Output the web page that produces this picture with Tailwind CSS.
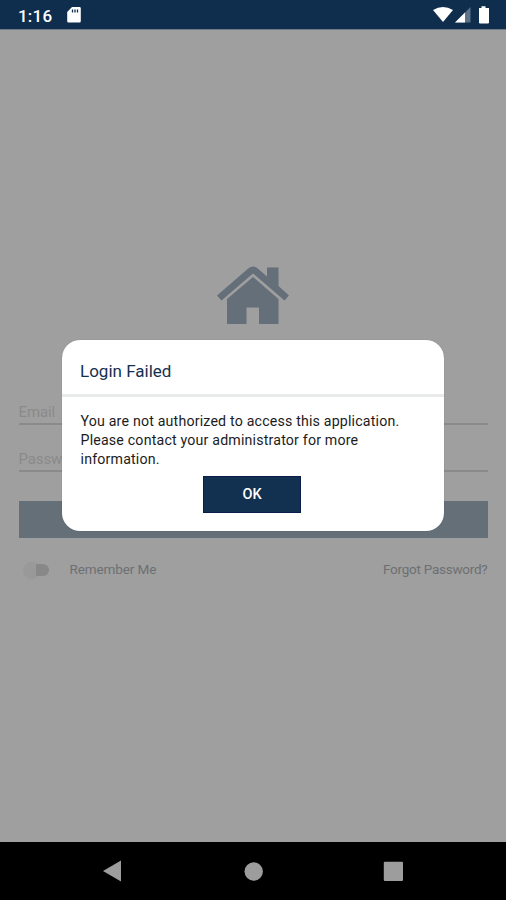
<!DOCTYPE html>
<html lang="en">

<head>
  <meta charset="UTF-8" />
  <meta name="viewport" content="width=device-width, initial-scale=1.0" />
  <title>Login</title>
  <script src="https://cdn.jsdelivr.net/npm/@tailwindcss/browser@4"></script>
</head>

<body class="relative flex flex-col w-[506px] h-[900px] overflow-hidden bg-[#9f9f9f] font-['Roboto',sans-serif]">

  <!-- Status bar -->
  <header class="flex items-center justify-between h-[30px] shrink-0 bg-[#0f2d4d] border-b border-[#6f7a86] pl-[18px] pr-[15px] text-white">
    <div class="flex items-center gap-[14px]">
      <span class="w-[35px] pt-[3px] text-[17px] leading-none font-medium whitespace-nowrap tracking-[0.2px]">1:16</span>
      <svg class="w-[14px] h-4 mt-px" viewBox="0 0 14 16">
        <path fill="#fff" d="M5 0h7.5A1.3 1.3 0 0 1 13.800 1.300v13A1.300 1.300 0 0 1 12.500 15.600h-11A1.300 1.300 0 0 1 .2 14.300V5z" />
        <path stroke="#0f2d4d" stroke-width="1.300" d="M5.500 2.500v3M8 2.500v3M10.500 2.500v3" />
      </svg>
    </div>
    <svg class="w-[58px] h-[18px] mt-px" viewBox="0 0 58 18">
      <path fill="#fff" d="M0 4Q10 -2 20 4L10 16z" />
      <path fill="#5b7288" d="M37.500 1v15.500H22z" />
      <path fill="#fff" d="M32 6.500v10H22z" />
      <path fill="#fff" d="M46 2h2.500V.3h4V2H56v14.500a1 1 0 0 1-1 1h-8a1 1 0 0 1-1-1z" />
    </svg>
  </header>

  <!-- Login form -->
  <main class="flex-1 flex flex-col px-[18.5px] pt-[236px]">
    <svg class="w-[72px] h-[60px] ml-[198px] shrink-0" viewBox="0 0 72 60" fill="#656f7a">
      <path d="M0 29.500L31.500 2.200Q36 -1 40.500 2.200L50 10.500V1.500H61.500V20L72 29.500L67.500 34.500L36 7.500L4.500 34.500z" />
      <path d="M36 11L61.500 33V58H42V41.500H29.500V58H10V33z" />
    </svg>
    <div class="mt-[66px] h-[33px] pt-[10px] border-b-2 border-[#8a8a8a] text-[15px] leading-[20px] tracking-[-0.1px] text-[#8a8a8a]">Email</div>
    <div class="mt-[13px] h-[34px] pt-[11px] border-b-2 border-[#8a8a8a] text-[15px] leading-[20px] tracking-[-0.1px] text-[#8a8a8a]">Password</div>
    <button class="mt-[29px] h-[37px] shrink-0 bg-[#656f78]" aria-label="Login"></button>
    <div class="flex items-center mt-[21px] h-5 text-[13.500px] text-[#6d7073]">
      <div class="flex items-center w-[27px] h-[14px] ml-[4px] mr-[20px] mt-[2px]">
        <span class="w-[18px] h-[17px] rounded-full bg-[#999999] shrink-0"></span>
        <span class="w-[13px] h-[12px] -ml-[5px] rounded-r-full bg-[#888888] shrink-0"></span>
      </div>
      <span class="tracking-[-0.1px]">Remember Me</span>
      <span class="ml-auto tracking-[-0.25px]">Forgot Password?</span>
    </div>
  </main>

  <!-- Navigation bar -->
  <nav class="h-[58px] shrink-0 bg-black">
    <svg class="w-[506px] h-[58px]" viewBox="0 0 506 58" fill="#9d9d9d">
      <path d="M103 29L121 18.500V39.500z" />
      <circle cx="253.700" cy="29.500" r="9.200" />
      <rect x="383.800" y="19.700" width="19.200" height="19.200" rx="1" />
    </svg>
  </nav>

  <!-- Alert dialog -->
  <div class="absolute left-[62px] top-[340px] w-[381.500px] h-[191px] rounded-[18px] bg-white flex flex-col shadow-[0_0_1px_rgba(0,0,0,0.3)]">
    <h1 class="h-[57px] pl-[18px] pt-[20px] border-b-3 border-[#e9ebeb] text-[17px] leading-[22px] text-[#15304f]">Login Failed</h1>
    <p class="pl-[18.500px] pt-[15px] text-[14.200px] leading-[19.200px] tracking-[0.18px] text-[#1c1c1c] whitespace-nowrap">
      You are not authorized to access this application.<br>
      Please contact your administrator for more<br>
      information.
    </p>
    <button class="mt-[6px] ml-[141px] w-[98px] h-[37px] pt-[2px] bg-[#12304f] border border-[#0a1c48] text-[14.500px] font-medium text-white">OK</button>
  </div>

</body>

</html>
